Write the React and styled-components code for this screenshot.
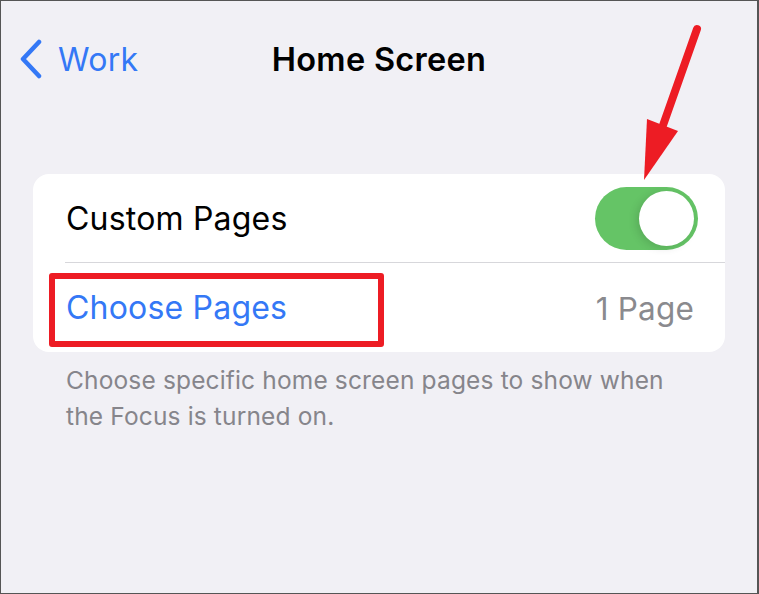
import React from "react";
import styled, { createGlobalStyle } from "styled-components";

const GlobalStyle = createGlobalStyle`
  html, body { margin: 0; padding: 0; background: #f2f2f7; }
  * { box-sizing: border-box; }
`;

const Frame = styled.div`
  position: relative;
  width: 759px;
  height: 594px;
  border: 1px solid #555;
  border-right-width: 2px;
  background: #f1f0f5;
  font-family: Inter, "Helvetica Neue", Arial, sans-serif;
  overflow: hidden;
`;

const NavBar = styled.div`
  position: relative;
  display: flex;
  align-items: center;
  justify-content: center;
  height: 118px;
  padding-bottom: 2px;
`;

const BackButton = styled.div`
  position: absolute;
  left: 18px;
  top: 38px;
  display: flex;
  align-items: center;
  gap: 15px;
  color: #3478f6;
  font-size: 32px;
  letter-spacing: 0.3px;
`;

const Title = styled.div`
  font-size: 32.5px;
  font-weight: 600;
  color: #000;
  letter-spacing: 0.3px;
  margin-top: 0;
`;

const Card = styled.div`
  margin: 55px 32px 0 32px;
  background: #fff;
  border-radius: 16px;
  overflow: hidden;
`;

const Row = styled.div`
  position: relative;
  display: flex;
  align-items: center;
  justify-content: space-between;
  height: 89px;
  padding: 0 27px 0 33px;
  ${(p) => p.$divider && `
    &::after {
      content: "";
      position: absolute;
      left: 32px;
      right: 0;
      bottom: 0;
      height: 1px;
      background: #d7d7db;
    }
  `}
`;

const Label = styled.span`
  font-size: 32px;
  color: ${(p) => (p.$link ? "#3478f6" : "#000")};
  letter-spacing: 0.2px;
`;

const Value = styled.span`
  font-size: 31.5px;
  color: #8a8a8e;
  letter-spacing: 0.2px;
  margin-right: 4px;
  margin-top: 2px;
`;

const Switch = styled.div`
  position: relative;
  width: 103px;
  height: 63px;
  border-radius: 32px;
  background: #65c466;
`;

const Knob = styled.div`
  position: absolute;
  right: 4px;
  top: 4px;
  width: 55px;
  height: 55px;
  border-radius: 50%;
  background: #fff;
  box-shadow: -3px 2px 8px rgba(0, 0, 0, 0.12);
`;

const Highlight = styled.div`
  position: absolute;
  left: 16px;
  top: 10px;
  width: 335px;
  height: 74px;
  border: 6px solid #ed1c24;
  border-radius: 3px;
  pointer-events: none;
`;

const Footnote = styled.p`
  margin: 10px 80px 0 65px;
  font-size: 24.5px;
  line-height: 36px;
  color: #86858b;
  letter-spacing: 0.15px;
`;

const Arrow = styled.svg`
  position: absolute;
  left: 0;
  top: 0;
  pointer-events: none;
`;

export default function App() {
  return (
    <>
      <GlobalStyle />
      <Frame>
        <NavBar>
          <BackButton>
            <svg width="24" height="40" viewBox="0 0 24 40">
              <path
                d="M20 3 L4 20 L20 37"
                fill="none"
                stroke="#3478f6"
                strokeWidth="4.5"
                strokeLinecap="round"
                strokeLinejoin="round"
              />
            </svg>
            <span>Work</span>
          </BackButton>
          <Title>Home Screen</Title>
        </NavBar>
        <Card>
          <Row $divider>
            <Label>Custom Pages</Label>
            <Switch>
              <Knob />
            </Switch>
          </Row>
          <Row>
            <Label $link>Choose Pages</Label>
            <Value>1 Page</Value>
            <Highlight />
          </Row>
        </Card>
        <Footnote>
          Choose specific home screen pages to show when the Focus is turned on.
        </Footnote>
        <Arrow width="759" height="594" viewBox="0 0 759 594">
          <line
            x1="696"
            y1="28"
            x2="660"
            y2="130"
            stroke="#ed1c24"
            strokeWidth="8"
            strokeLinecap="round"
          />
          <polygon points="643,179 646,118 677,130" fill="#ed1c24" />
        </Arrow>
      </Frame>
    </>
  );
}
